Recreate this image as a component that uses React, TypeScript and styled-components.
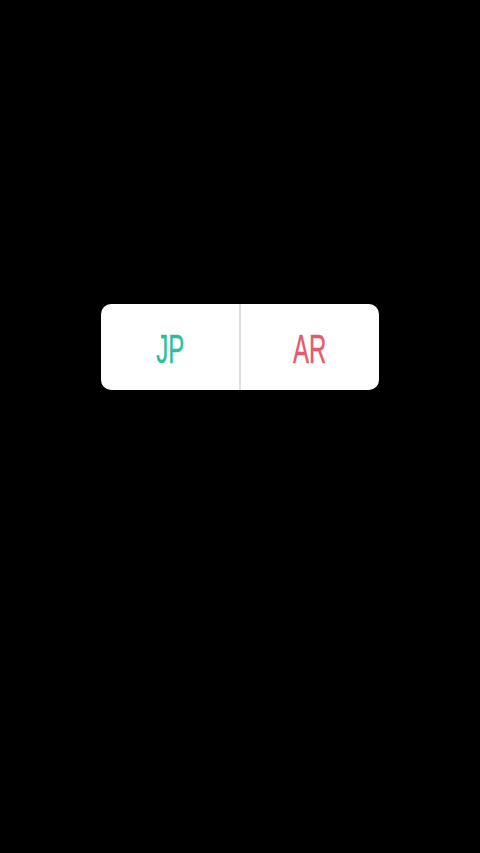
import React from "react";
import styled, { createGlobalStyle } from "styled-components";

const Global = createGlobalStyle`
  html, body { margin: 0; padding: 0; background: #000; }
  #root { min-height: 853px; }
`;

const Screen = styled.div`
  width: 480px;
  height: 853px;
  background: #000;
  display: flex;
  align-items: flex-start;
  justify-content: center;
  padding-top: 304px;
  box-sizing: border-box;
`;

const Card = styled.div`
  width: 278px;
  height: 86px;
  background: #fff;
  border-radius: 10px;
  display: flex;
  overflow: hidden;
`;

const Option = styled.div`
  flex: 1;
  display: flex;
  align-items: center;
  justify-content: center;
`;

const Divider = styled.div`
  width: 2px;
  background: #dcdcdc;
`;

const Label = styled.span<{ $color: string }>`
  font-family: "Liberation Sans", Arial, sans-serif;
  font-size: 40px;
  line-height: 1;
  color: ${(p) => p.$color};
  -webkit-text-stroke: 0.4px ${(p) => p.$color};
  display: inline-block;
  transform: scaleX(0.6);
  margin-top: 3px;
`;

export default function App() {
  return (
    <>
      <Global />
      <Screen>
        <Card>
          <Option>
            <Label $color="#2bbf9c">JP</Label>
          </Option>
          <Divider />
          <Option>
            <Label $color="#e55a6e">AR</Label>
          </Option>
        </Card>
      </Screen>
    </>
  );
}
